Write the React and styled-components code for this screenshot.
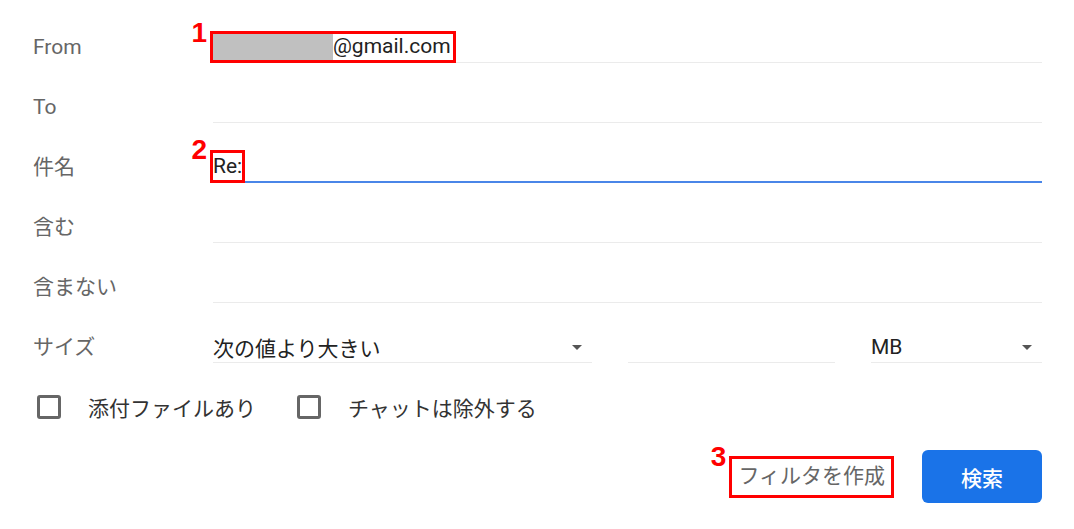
import React from 'react';
import styled, { createGlobalStyle } from 'styled-components';

const GlobalStyle = createGlobalStyle`
  body {
    margin: 0;
    background: #fff;
    font-family: Roboto, 'Noto Sans CJK JP', sans-serif;
  }
`;

const Form = styled.div`
  display: flex;
  flex-direction: column;
  gap: 28px;
  padding: 31px 32px 0 33px;
  width: 1074px;
  box-sizing: border-box;
`;

const Row = styled.div`
  display: grid;
  grid-template-columns: 180px 1fr;
  height: 32px;
  align-items: stretch;
`;

const Label = styled.div`
  font-size: 21px;
  line-height: 32px;
  color: #666;
`;

const Field = styled.div`
  display: flex;
  align-items: center;
  box-sizing: border-box;
  height: 32px;
  border-bottom: ${(p) => (p.$focused ? '2px solid #4a86e8' : '1px solid #ebebeb')};
  font-size: 21px;
  color: #222;
`;

const SizeFields = styled.div`
  display: grid;
  grid-template-columns: 379px 1fr 171px;
  gap: 36px;
`;

const Select = styled(Field)`
  justify-content: space-between;
  padding-right: 10px;
`;

const Caret = styled.span`
  width: 0;
  height: 0;
  border-left: 5px solid transparent;
  border-right: 5px solid transparent;
  border-top: 5px solid #555;
  margin-top: 2px;
`;

const Marked = styled.span`
  position: relative;
  display: inline-flex;
  align-items: center;
  box-sizing: border-box;
  height: ${(p) => p.$h}px;
  margin-left: ${(p) => p.$shift}px;
  padding: ${(p) => p.$pad};
  border: 3px solid #f00;
  line-height: 1;
`;

const Badge = styled.span`
  position: absolute;
  right: calc(100% + 6px);
  top: ${(p) => p.$top}px;
  font: bold 28px/1 'Liberation Sans', Arial, sans-serif;
  color: #f00;
`;

const Redacted = styled.span`
  align-self: stretch;
  width: 120px;
  background: #c0c0c0;
`;

const Checks = styled.div`
  display: flex;
  align-items: center;
  gap: 41px;
  height: 32px;
  padding-left: 4px;
`;

const CheckItem = styled.label`
  display: flex;
  align-items: center;
  gap: 27px;
  font-size: 21px;
  color: #333;
`;

const Box = styled.span`
  width: 24px;
  height: 24px;
  box-sizing: border-box;
  border: 3px solid #666;
  border-radius: 3px;
`;

const Actions = styled.div`
  display: flex;
  justify-content: flex-end;
  align-items: center;
  gap: 28px;
  margin-top: -1px;
`;

const TextButton = styled.span`
  font-size: 21px;
  color: #666;
`;

const SearchButton = styled.button`
  width: 120px;
  height: 53px;
  border: none;
  border-radius: 6px;
  background: #1a73e8;
  color: #fff;
  font-family: Roboto, 'Noto Sans CJK JP', sans-serif;
  font-size: 21px;
  font-weight: 500;
`;

export default function App() {
  return (
    <>
      <GlobalStyle />
      <Form>
        <Row>
          <Label>From</Label>
          <Field>
            <Marked $h={32} $shift={-3} $pad="0 2px 0 0">
              <Badge $top={-15}>1</Badge>
              <Redacted />
              @gmail.com
            </Marked>
          </Field>
        </Row>
        <Row>
          <Label>To</Label>
          <Field />
        </Row>
        <Row>
          <Label>件名</Label>
          <Field $focused>
            <Marked $h={33} $shift={-3} $pad="0">
              <Badge $top={-17}>2</Badge>
              Re:
            </Marked>
          </Field>
        </Row>
        <Row>
          <Label>含む</Label>
          <Field />
        </Row>
        <Row>
          <Label>含まない</Label>
          <Field />
        </Row>
        <Row>
          <Label>サイズ</Label>
          <SizeFields>
            <Select>
              次の値より大きい
              <Caret />
            </Select>
            <Field />
            <Select>
              MB
              <Caret />
            </Select>
          </SizeFields>
        </Row>
        <Checks>
          <CheckItem>
            <Box />
            添付ファイルあり
          </CheckItem>
          <CheckItem>
            <Box />
            チャットは除外する
          </CheckItem>
        </Checks>
        <Actions>
          <Marked $h={42} $shift={0} $pad="0 6px">
            <Badge $top={-16}>3</Badge>
            <TextButton>フィルタを作成</TextButton>
          </Marked>
          <SearchButton>検索</SearchButton>
        </Actions>
      </Form>
    </>
  );
}
